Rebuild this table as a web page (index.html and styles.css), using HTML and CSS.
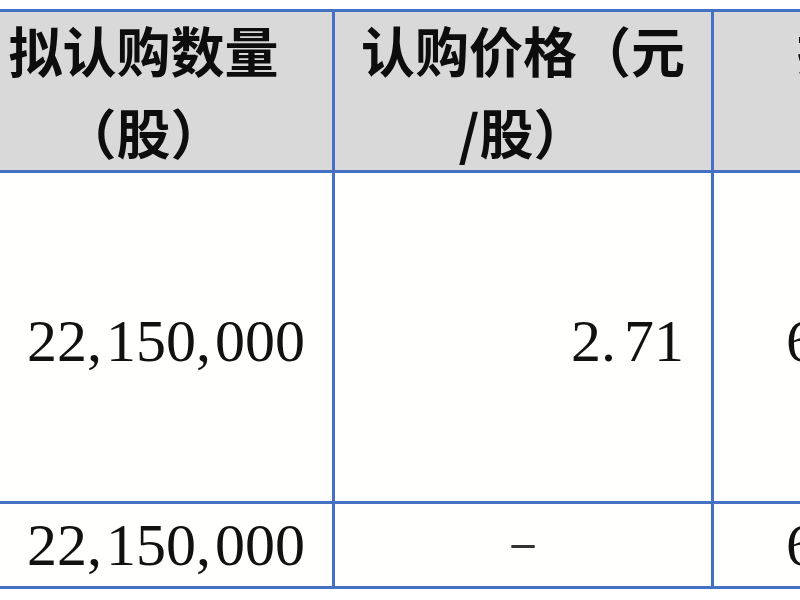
FILE: index.html
```html
<!DOCTYPE html>
<html lang="zh-CN">
<head>
<meta charset="utf-8">
<title>认购表</title>
<link rel="stylesheet" href="styles.css">
</head>
<body>
<div class="sheet">
  <div class="cell head">拟认购数量<br>（股）</div>
  <div class="cell head">认购价格（元<br>/股）</div>
  <div class="cell head">拟认购金额<br>（元）</div>

  <div class="cell num right tall">22<span class="sep">,</span>150<span class="sep">,</span>000</div>
  <div class="cell num right tall">2<span class="dot">.</span>71</div>
  <div class="cell num center shift tall">60<span class="sep">,</span>026<span class="sep">,</span>500</div>

  <div class="cell num right">22<span class="sep">,</span>150<span class="sep">,</span>000</div>
  <div class="cell num center"><span class="dash">-</span></div>
  <div class="cell num center shift">60<span class="sep">,</span>026<span class="sep">,</span>500</div>
</div>
</body>
</html>
```

FILE: styles.css
```css
html, body {
  margin: 0;
  padding: 0;
  background: #ffffff;
  overflow: hidden;
  width: 800px;
  height: 600px;
}

.sheet {
  display: grid;
  grid-template-columns: 380px 379px 439px;
  grid-template-rows: 161px 331px 85px;
  width: max-content;
  margin-top: 9px;
  margin-left: -45px;
  border-top: 3px solid #4471c4;
}

.cell {
  box-sizing: border-box;
  border-right: 3px solid #4471c4;
  border-bottom: 3px solid #4471c4;
  display: flex;
  align-items: center;
  color: #111111;
  white-space: nowrap;
}

.head {
  background: #d9d9d9;
  justify-content: center;
  text-align: center;
  font-family: "Noto Sans CJK SC", "Noto Sans", sans-serif;
  font-weight: 700;
  font-size: 54px;
  line-height: 82px;
  color: #0d0d0d;
}

.num {
  font-family: "Liberation Serif", "DejaVu Serif", serif;
  font-size: 60px;
  line-height: normal;
  background: #fffffd;
}

.right {
  justify-content: flex-end;
  padding-right: 27px;
}

.center {
  justify-content: center;
}

.shift {
  padding-right: 14px;
}

.tall {
  padding-top: 8px;
}

.sep {
  margin-right: 4px;
}

.dot {
  margin-right: 8px;
}

.dash {
  display: inline-block;
  transform: translateY(-2px) scale(1.5, 0.65);
  color: #333333;
}
```
